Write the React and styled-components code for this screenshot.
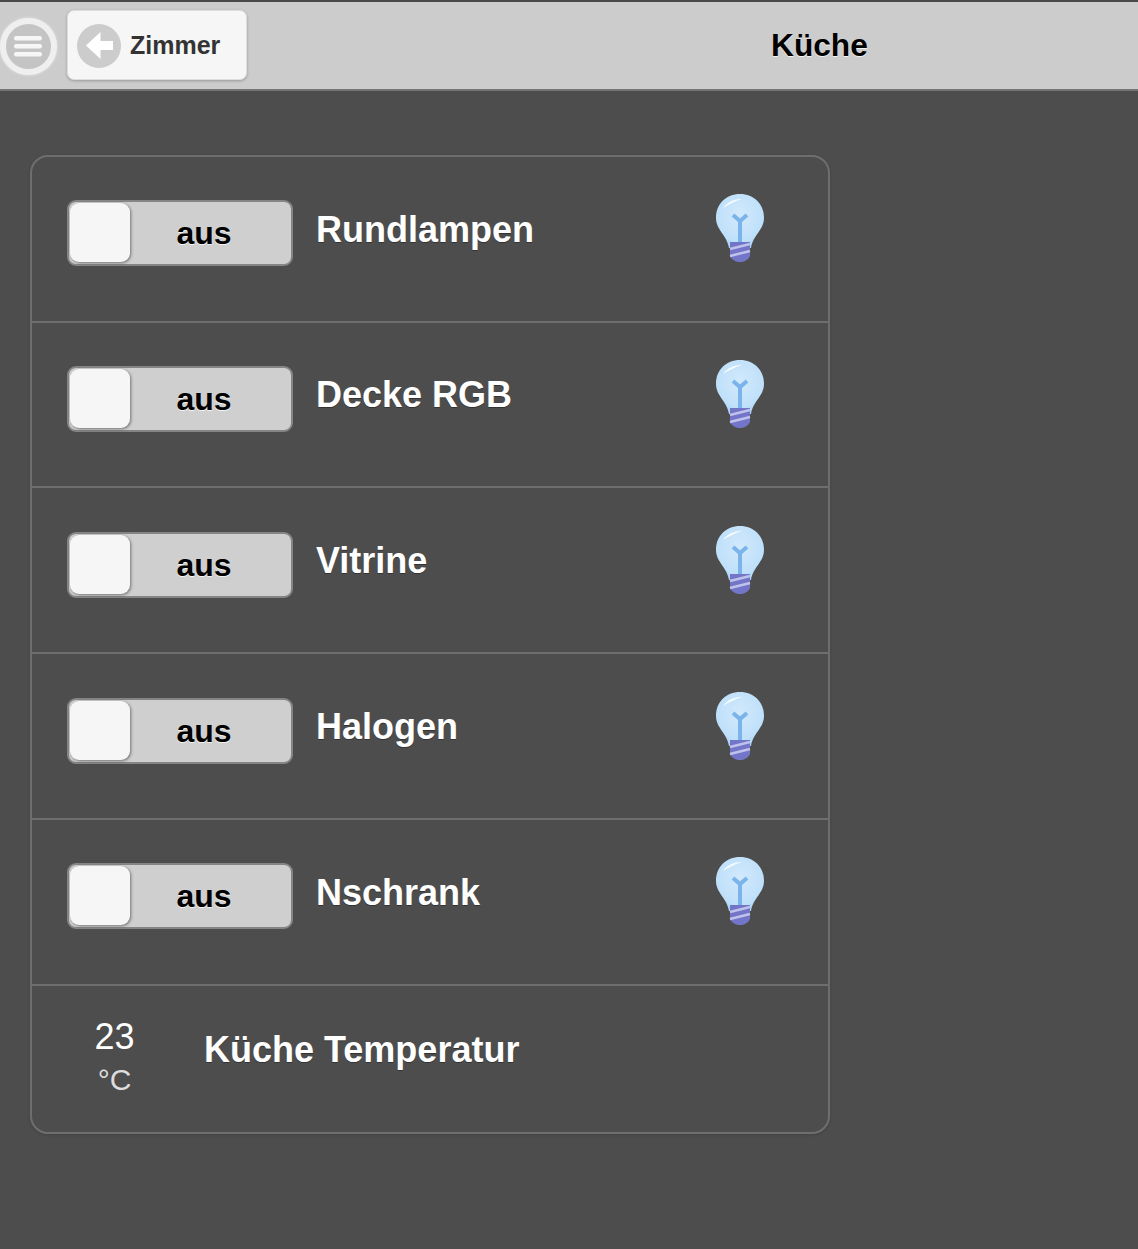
import React from "react";
import styled, { createGlobalStyle } from "styled-components";

const Global = createGlobalStyle`
  html, body { margin: 0; padding: 0; background: #4d4d4d; }
  body { font-family: "Liberation Sans", Arial, sans-serif; }
`;
const Page = styled.div`
  width: 1138px;
  height: 1249px;
  background: #4d4d4d;
  overflow: hidden;
`;
const Header = styled.header`
  box-sizing: border-box;
  height: 91px;
  display: flex;
  align-items: center;
  background: #cccccc;
  border-top: 2px solid #4a4a4a;
  border-bottom: 2px solid #757575;
`;
const MenuButton = styled.button`
  box-sizing: border-box;
  flex: none;
  width: 57px;
  height: 57px;
  margin: 1px 0 0 0;
  padding: 0 1px 0 0;
  display: flex;
  align-items: center;
  justify-content: center;
  border-radius: 50%;
  background: #c4c4c4;
  border: 6px solid #efefef;
  box-shadow: 0 0 3px rgba(255, 255, 255, 0.6);
`;
const BackButton = styled.button`
  box-sizing: border-box;
  flex: none;
  width: 180px;
  height: 70px;
  margin: -2px 0 0 10px;
  padding: 2px 0 0 9px;
  display: flex;
  align-items: center;
  gap: 9px;
  background: #f6f6f6;
  border: 1px solid #dddddd;
  border-radius: 7px;
  box-shadow: 0 1px 3px rgba(0, 0, 0, 0.25);
  font: bold 25px "Liberation Sans", Arial, sans-serif;
  color: #333333;
`;
const BackDisc = styled.span`
  flex: none;
  width: 44px;
  height: 44px;
  display: flex;
  align-items: center;
  justify-content: center;
  border-radius: 50%;
  background: #cccccc;
`;
const HeaderTitle = styled.h1`
  position: absolute;
  left: 771px;
  top: 27px;
  margin: 0;
  font-size: 31.7px;
  line-height: 36px;
  font-weight: bold;
  color: #000000;
  text-shadow: 0 1px 0 #f3f3f3;
`;
const Card = styled.section`
  box-sizing: border-box;
  width: 800px;
  margin: 64px 0 0 30px;
  border: 2px solid #6e6e6e;
  border-radius: 18px;
  box-shadow: 0 1px 3px rgba(0, 0, 0, 0.15);
`;
const Row = styled.div`
  box-sizing: border-box;
  height: 165.72px;
  display: grid;
  grid-template-columns: 226px 1fr 50px;
  column-gap: 24px;
  padding: 43.45px 63px 0 35px;
  align-items: start;
  border-bottom: 2px solid #6e6e6e;
`;
const Switch = styled.div`
  box-sizing: border-box;
  width: 226px;
  height: 66px;
  padding: 1px 3px 0 1px;
  display: flex;
  background: #cfcfcf;
  border: 2px solid #858585;
  border-radius: 9px;
`;
const Knob = styled.span`
  flex: none;
  width: 60px;
  height: 59px;
  background: #f6f6f6;
  border-radius: 9px;
  box-shadow: 1px 1px 3px rgba(0, 0, 0, 0.45);
`;
const SwitchText = styled.span`
  flex: 1;
  padding-right: 10px;
  text-align: center;
  font-size: 32px;
  font-weight: bold;
  line-height: 61px;
  color: #000000;
  text-shadow: 0 1px 0 #f3f3f3;
`;
const Label = styled.div`
  margin-top: -3.7px;
  margin-left: -1px;
  font-size: 36px;
  line-height: 66px;
  font-weight: bold;
  color: #ffffff;
  text-shadow: 0 1px 0 #333333;
`;
const BulbBox = styled.svg`
  display: block;
  margin-top: -7px;
  width: 50px;
  height: 70px;
`;
const TempRow = styled.div`
  box-sizing: border-box;
  height: 146.4px;
  display: flex;
  align-items: flex-start;
  padding-top: 30px;
`;
const TempValue = styled.div`
  flex: none;
  width: 165px;
  text-align: center;
  color: #ffffff;
`;
const TempNumber = styled.div`
  font-size: 36px;
  line-height: 42px;
`;
const TempUnit = styled.div`
  font-size: 30px;
  line-height: 43px;
  color: #dddddd;
`;
const TempLabel = styled.div`
  margin: 1px 0 0 7px;
  font-size: 36px;
  line-height: 66px;
  font-weight: bold;
  color: #ffffff;
  text-shadow: 0 1px 0 #333333;
`;

const Burger = () => (
  <svg width="28" height="21" viewBox="0 0 28 21">
    <rect x="0" y="0" width="28" height="4.5" rx="2.2" fill="#f6f6f6" />
    <rect x="0" y="8" width="28" height="4.5" rx="2.2" fill="#f6f6f6" />
    <rect x="0" y="16" width="28" height="4.5" rx="2.2" fill="#f6f6f6" />
  </svg>
);
const Arrow = () => (
  <svg width="27" height="27" viewBox="0 0 27 27">
    <path d="M14.5 0 L0 13.5 L14.5 27 L14.5 18 L27 18 L27 9 L14.5 9 Z" fill="#ffffff" />
  </svg>
);
const Bulb = () => (
  <BulbBox viewBox="0 0 50 70">
    <defs>
      <radialGradient id="glass" cx="0.5" cy="0.4" r="0.6">
        <stop offset="0" stopColor="#d2e9fc" />
        <stop offset="0.8" stopColor="#bfe0fa" />
        <stop offset="1" stopColor="#a8d4f6" />
      </radialGradient>
    </defs>
    <path d="M25 1 C11 1 1 11 1 25 C1 37 12 42 14 55 L36 55 C38 42 49 37 49 25 C49 11 39 1 25 1 Z" fill="url(#glass)" />
    <path d="M8 15 C13 8 20 6 27 6 C20 8 13 12 8 15 Z" fill="#f3fbff" />
    <path d="M18 22 L25 28 L32 22 M25 27 L25 50" fill="none" stroke="#7ab4ea" strokeWidth="4" />
    <path d="M15 49 L35 49 L35 63 C33 67 29 69 25 69 C21 69 17 67 15 63 Z" fill="#7275c8" />
    <path d="M15 56 L35 51 M15 63 L35 58" stroke="#bfc2ea" strokeWidth="2.4" />
  </BulbBox>
);

const lamps = ["Rundlampen", "Decke RGB", "Vitrine", "Halogen", "Nschrank"];

export default function App() {
  return (
    <Page>
      <Global />
      <Header>
        <MenuButton aria-label="Menü"><Burger /></MenuButton>
        <BackButton><BackDisc><Arrow /></BackDisc>Zimmer</BackButton>
        <HeaderTitle>Küche</HeaderTitle>
      </Header>
      <Card>
        {lamps.map((name) => (
          <Row key={name}>
            <Switch><Knob /><SwitchText>aus</SwitchText></Switch>
            <Label>{name}</Label>
            <Bulb />
          </Row>
        ))}
        <TempRow>
          <TempValue>
            <TempNumber>23</TempNumber>
            <TempUnit>°C</TempUnit>
          </TempValue>
          <TempLabel>Küche Temperatur</TempLabel>
        </TempRow>
      </Card>
    </Page>
  );
}
